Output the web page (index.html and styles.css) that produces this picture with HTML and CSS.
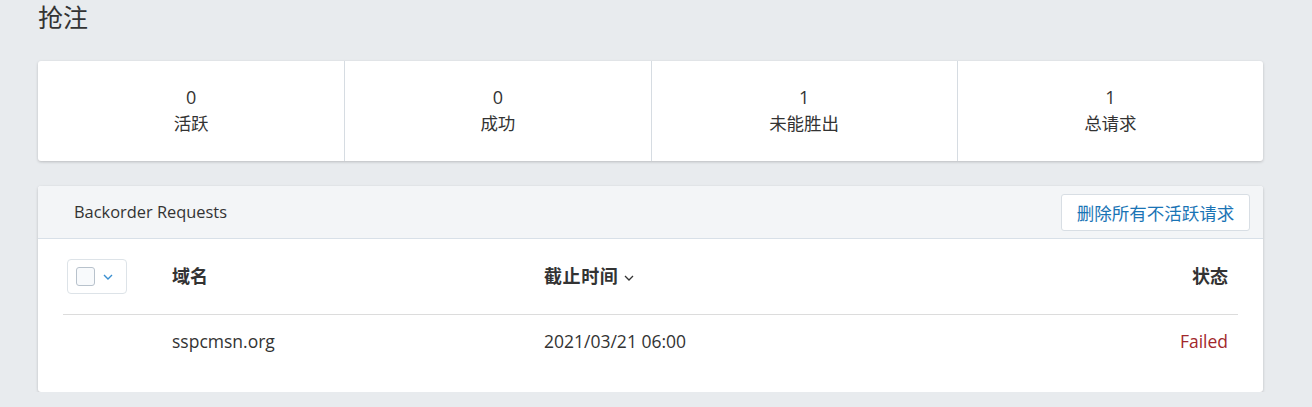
FILE: index.html
```html
<!DOCTYPE html>
<html lang="zh-CN">
<head>
<meta charset="utf-8">
<title>抢注</title>
<link rel="stylesheet" href="styles.css">
</head>
<body>
<div class="page">
  <h1 class="title">抢注</h1>
  <div class="stats">
    <div class="stat"><div class="num">0</div><div class="label">活跃</div></div>
    <div class="stat"><div class="num">0</div><div class="label">成功</div></div>
    <div class="stat"><div class="num">1</div><div class="label">未能胜出</div></div>
    <div class="stat"><div class="num">1</div><div class="label">总请求</div></div>
  </div>
  <div class="panel">
    <div class="panel-head">
      <span class="panel-title">Backorder Requests</span>
      <button class="btn">删除所有不活跃请求</button>
    </div>
    <div class="table">
      <div class="row head">
        <div class="cell sel">
          <div class="selbox">
            <span class="check"></span>
            <svg class="caret" width="10" height="6" viewBox="0 0 10 6"><path d="M1 1l4 4 4-4" fill="none" stroke="#3a8fd0" stroke-width="1.4"/></svg>
          </div>
        </div>
        <div class="cell">域名</div>
        <div class="cell"><span class="hd">截止时间</span><svg class="sort" width="10" height="6" viewBox="0 0 10 6"><path d="M1 1l4 4 4-4" fill="none" stroke="#333" stroke-width="1.3"/></svg></div>
        <div class="cell right">状态</div>
      </div>
      <div class="row body">
        <div class="cell sel"></div>
        <div class="cell">sspcmsn.org</div>
        <div class="cell">2021/03/21 06:00</div>
        <div class="cell right failed">Failed</div>
      </div>
    </div>
  </div>
</div>
</body>
</html>
```
FILE: styles.css
```css
* { box-sizing: border-box; }
html, body { margin: 0; padding: 0; }
body {
  background: #e8ebee;
  font-family: "Open Sans", "Noto Sans CJK SC", sans-serif;
  color: #333;
}
.page {
  padding: 0 49px 0 38px;
}
.title {
  margin: 0;
  font-size: 25px;
  font-weight: 400;
  line-height: 34px;
  color: #333;
}
.stats {
  margin-top: 27px;
  height: 100px;
  background: #fff;
  border-radius: 3px;
  box-shadow: 0 1px 3px rgba(0,0,0,0.2);
  display: grid;
  grid-template-columns: repeat(4, 1fr);
}
.stat {
  display: flex;
  flex-direction: column;
  align-items: center;
  justify-content: center;
  border-left: 1px solid #d6dce2;
  padding-bottom: 2px;
}
.stat:first-child { border-left: none; }
.num { font-size: 18px; line-height: 26px; }
.label { font-size: 17.5px; line-height: 26px; }
.panel {
  margin-top: 25px;
  background: #fff;
  border-radius: 3px;
  box-shadow: 0 1px 3px rgba(0,0,0,0.2);
  padding-bottom: 25px;
}
.panel-head {
  height: 53px;
  background: #f3f5f7;
  border-bottom: 1px solid #d8e0e8;
  border-radius: 3px 3px 0 0;
  display: flex;
  align-items: center;
  justify-content: space-between;
  padding: 0 13px 2px 36px;
}
.panel-title { font-size: 16.4px; color: #333; }
.btn {
  height: 37px;
  width: 189px;
  margin-top: 2px;
  background: #fff;
  border: 1px solid #d8dee4;
  border-radius: 3px;
  font-family: "Open Sans", "Noto Sans CJK SC", sans-serif;
  font-size: 17.5px;
  color: #1a74b5;
  padding: 0;
}
.table { padding: 0 25px; }
.row {
  display: grid;
  grid-template-columns: 109px 372px 1fr auto;
  align-items: center;
}
.row.head {
  height: 76px;
  border-bottom: 1px solid #dcdcdc;
  font-weight: 700;
  font-size: 18px;
  padding-bottom: 4px;
}
.hd { letter-spacing: 0.6px; }
.row.head .sel { padding-top: 4px; }
.row.body { height: 52px; font-size: 17.5px; }
.cell.right { text-align: right; padding-right: 10px; }
.selbox {
  margin-left: 4px;
  width: 60px;
  height: 35px;
  border: 1px solid #dde3e8;
  border-radius: 4px;
  display: flex;
  align-items: center;
  padding-left: 8px;
  gap: 8px;
}
.check {
  width: 19px;
  height: 19px;
  border: 1px solid #b8c2cc;
  border-radius: 3px;
  background: #f8fafc;
}
.sort { margin-left: 6px; vertical-align: middle; }
.failed { color: #a2282c; }
```
